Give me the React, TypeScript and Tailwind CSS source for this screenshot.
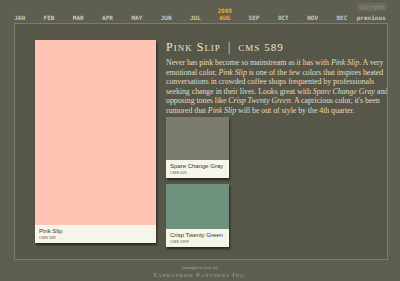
import React from "react";

const months = ["JAN","FEB","MAR","APR","MAY","JUN","JUL","AUG","SEP","OCT","NOV","DEC"];

function Swatch({ color, name, code, h, w, labelH }: { color: string; name: string; code: string; h: number; w: number; labelH: number }) {
  return (
    <div className="flex flex-col shadow-[1px_2px_2px_rgba(0,0,0,0.55)] shrink-0" style={{ width: w, height: h }}>
      <div className="flex-1" style={{ background: color }} />
      <div className="bg-[#f6f5ea] flex flex-col justify-center px-[4px]" style={{ height: labelH }}>
        <div className="text-[6px] leading-[7px] text-[#333] whitespace-nowrap" style={{ fontFamily: '"Liberation Sans", sans-serif' }}>{name}</div>
        <div className="text-[4px] leading-[5px] text-[#555] whitespace-nowrap" style={{ fontFamily: '"Liberation Sans", sans-serif' }}>{code}</div>
      </div>
    </div>
  );
}

export default function App() {
  const serif = { fontFamily: '"Liberation Serif", "DejaVu Serif", serif' };
  const mono = { fontFamily: '"DejaVu Sans Mono", monospace' };
  return (
    <div className="w-[400px] h-[281px] bg-[#5f5f51] overflow-hidden relative">
      <div className="absolute right-[13px] top-[3px] w-[30px] h-[8px] bg-[#6b6b5e] text-[#85857a] text-[6px] leading-[8px] text-center font-bold" style={mono}>current</div>
      <div className="h-[23px] pl-[5px] grid grid-cols-[repeat(13,29.3px)] items-end pb-[2px]">
        {months.map((m) => (
          <div key={m} className="flex flex-col items-center" style={mono}>
            {m === "AUG" && <div className="text-[6px] leading-[7px] font-bold text-[#e6ad33]">2008</div>}
            <div className={`text-[6px] leading-[7px] font-bold ${m === "AUG" ? "text-[#e6ad33]" : "text-[#c9c9b9]"}`}>{m}</div>
          </div>
        ))}
        <div className="text-[6px] leading-[7px] font-bold text-[#c9c9b9] text-center" style={mono}>previous</div>
      </div>
      <div className="ml-[14px] w-[374px] h-[237px] border border-[#7d7d6d] bg-[#565649] flex pt-[16px] pl-[20px] overflow-hidden">
        <Swatch color="#fec4b4" name="Pink Slip" code="CMS 589" w={121} h={203} labelH={18} />
        <div className="ml-[10px] flex flex-col">
          <div className="text-[#ebe6cc] text-[12px] leading-[14px] tracking-[1px]" style={serif}>
            <span>P<span className="text-[9px]">INK</span> S<span className="text-[9px]">LIP</span></span>
            <span className="mx-[7px]">|</span>
            <span className="text-[9px]">CMS</span> <span className="text-[11px]">589</span>
          </div>
          <p className="mt-[3px] w-[224px] text-[7.9px] leading-[9.6px] text-[#e2ddc4] tracking-[-0.05px]" style={serif}>
            Never has pink become so mainstream as it has with <i>Pink Slip</i>. A very emotional color, <i>Pink Slip</i> is one of the few colors that inspires heated conversations in crowded coffee shops frequented by professionals seeking change in their lives. Looks great with <i>Spare Change Gray</i> and opposing tones like <i>Crisp Twenty Green</i>. A capricious color, it's been rumored that <i>Pink Slip</i> will be out of style by the 4th quarter.
          </p>
          <div className="mt-[1px] flex flex-col gap-[6px]">
            <Swatch color="#7c7c6c" name="Spare Change Gray" code="CMS 005" w={63} h={61} labelH={18} />
            <Swatch color="#6f927e" name="Crisp Twenty Green" code="CMS 1999" w={63} h={63} labelH={18} />
          </div>
        </div>
      </div>
      <div className="flex flex-col items-center mt-[5px]" style={serif}>
        <div className="text-[5px] leading-[6px] text-[#a9a996]">brought to you by</div>
        <div className="text-[6px] leading-[8px] text-[#a9a996] tracking-[1px]">S<span className="text-[5px]">ANDSTROM</span> P<span className="text-[5px]">ARTNERS</span> I<span className="text-[5px]">NC.</span></div>
      </div>
    </div>
  );
}
